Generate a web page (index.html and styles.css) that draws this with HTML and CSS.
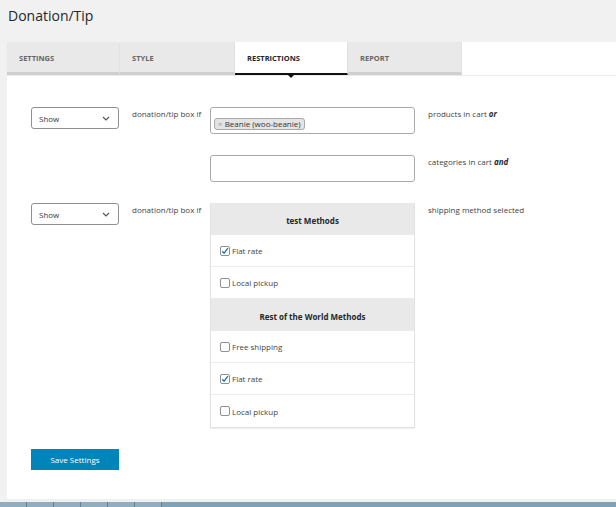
FILE: index.html
```html
<!DOCTYPE html>
<html lang="en">
<head>
    <meta charset="UTF-8">
    <title>Donation/Tip</title>
    <link rel="stylesheet" href="styles.css">
</head>
<body>
    <h1 class="page-title">Donation/Tip</h1>
    <div class="panel">
        <div class="tabs">
            <div class="tab">SETTINGS</div>
            <div class="tab wide">STYLE</div>
            <div class="tab active">RESTRICTIONS</div>
            <div class="tab">REPORT</div>
        </div>
        <div class="rules">
            <div class="select">Show
                <svg width="8" height="5" viewBox="0 0 8 5"><path d="M1 1l3 3 3-3" fill="none" stroke="#555" stroke-width="1.2"/></svg>
            </div>
            <div class="label">donation/tip box if</div>
            <div class="field tall">
                <span class="token"><span class="x">×</span> Beanie (woo-beanie)</span>
            </div>
            <div class="label">products in cart <b><i>or</i></b></div>

            <div></div>
            <div></div>
            <div class="field"></div>
            <div class="label">categories in cart <b><i>and</i></b></div>

            <div class="select">Show
                <svg width="8" height="5" viewBox="0 0 8 5"><path d="M1 1l3 3 3-3" fill="none" stroke="#555" stroke-width="1.2"/></svg>
            </div>
            <div class="label">donation/tip box if</div>
            <div class="methods">
                <div class="zone">test Methods</div>
                <div class="method"><span class="check on"><svg width="8" height="8" viewBox="0 0 8 8"><path d="M1.2 4.2l1.9 2 3.8-5" fill="none" stroke="#1e73be" stroke-width="1.3"/></svg></span>Flat rate</div>
                <div class="method"><span class="check"></span>Local pickup</div>
                <div class="zone">Rest of the World Methods</div>
                <div class="method"><span class="check"></span>Free shipping</div>
                <div class="method"><span class="check on"><svg width="8" height="8" viewBox="0 0 8 8"><path d="M1.2 4.2l1.9 2 3.8-5" fill="none" stroke="#1e73be" stroke-width="1.3"/></svg></span>Flat rate</div>
                <div class="method"><span class="check"></span>Local pickup</div>
            </div>
            <div class="label">shipping method selected</div>
        </div>
        <button class="save">Save Settings</button>
    </div>
    <div class="taskbar">
        <span></span><span></span><span></span><span></span><span></span><span></span>
    </div>
</body>
</html>
```

FILE: styles.css
```css
html, body {
    margin: 0;
    height: 507px;
    overflow: hidden;
}

body {
    background-color: #f1f1f1;
    font-family: "Open Sans", Arial, sans-serif;
    color: #444;
}

.page-title {
    margin: 0;
    height: 42px;
    padding: 6px 0 0 8px;
    box-sizing: border-box;
    font-size: 14px;
    font-weight: 400;
    color: #23282d;
}

.panel {
    margin-left: 7px;
    height: 457px;
    background-color: #fff;
    box-sizing: border-box;
}

.tabs {
    display: flex;
    height: 34px;
    border-bottom: 1px solid #ececec;
    box-sizing: border-box;
}

.tab {
    width: 113px;
    box-sizing: border-box;
    padding: 11px 0 0 12px;
    background-color: #e9e9e9;
    border-bottom: 3px solid #cfcfcf;
    border-right: 1px solid #e2e2e2;
    font-size: 7.5px;
    font-weight: 700;
    color: #666;
    position: relative;
}

.tab.wide {
    width: 115px;
}

.tab:last-child {
    width: 114px;
}

.tab.active {
    background-color: #fff;
    border-bottom: 2px solid #111;
    color: #23282d;
}

.tab.active::after {
    content: "";
    position: absolute;
    left: 50%;
    bottom: -5px;
    margin-left: -3px;
    border-left: 3px solid transparent;
    border-right: 3px solid transparent;
    border-top: 3px solid #111;
}

.rules {
    display: grid;
    grid-template-columns: 88px 67px 205px 1fr;
    column-gap: 12px;
    row-gap: 21px;
    padding: 31px 0 0 24px;
    align-items: start;
}

.select {
    height: 22px;
    box-sizing: border-box;
    border: 1px solid #8c8f94;
    border-radius: 3px;
    display: flex;
    align-items: center;
    justify-content: space-between;
    padding: 0 8px 0 7px;
    font-size: 8px;
    color: #32373c;
}

.label {
    font-size: 8px;
    line-height: 12px;
    padding-top: 1px;
    padding-left: 1px;
    white-space: nowrap;
    color: #444;
}

.label b {
    color: #23282d;
}

.field {
    height: 27px;
    box-sizing: border-box;
    border: 1px solid #aaa;
    border-radius: 3px;
    padding: 2px 3px;
}

.token {
    display: inline-block;
    background-color: #e4e4e4;
    border: 1px solid #aaa;
    border-radius: 3px;
    padding: 0 3px;
    font-size: 8px;
    line-height: 10px;
    color: #333;
}

.token .x {
    color: #999;
}

.methods {
    border: 1px solid #e2e2e2;
    border-top: none;
    box-shadow: 0 1px 1px rgba(0, 0, 0, 0.06);
}

.zone {
    height: 32px;
    background-color: #e9e9e9;
    display: flex;
    align-items: center;
    justify-content: center;
    padding-top: 2px;
    box-sizing: border-box;
    font-size: 8px;
    font-weight: 700;
    color: #23282d;
}

.method {
    height: 32px;
    box-sizing: border-box;
    border-bottom: 1px solid #ececec;
    display: flex;
    align-items: center;
    padding-left: 9px;
    font-size: 8px;
    color: #444;
}

.method:last-child {
    border-bottom: none;
}

.check {
    width: 10px;
    height: 10px;
    box-sizing: border-box;
    border: 1px solid #8c8f94;
    border-radius: 2px;
    margin-right: 2px;
    display: flex;
    align-items: center;
    justify-content: center;
}

.save {
    display: block;
    margin: 21px 0 0 24px;
    width: 88px;
    height: 21px;
    border: none;
    background-color: #0085ba;
    color: #fff;
    font-family: "Open Sans", Arial, sans-serif;
    font-size: 8px;
    padding: 0;
}

.taskbar {
    margin-top: 3px;
    height: 5px;
    display: flex;
    background-color: #7ea2b7;
}

.taskbar span {
    width: 26px;
    border-right: 1px solid #5f8399;
    background-color: #90aec0;
}
```
